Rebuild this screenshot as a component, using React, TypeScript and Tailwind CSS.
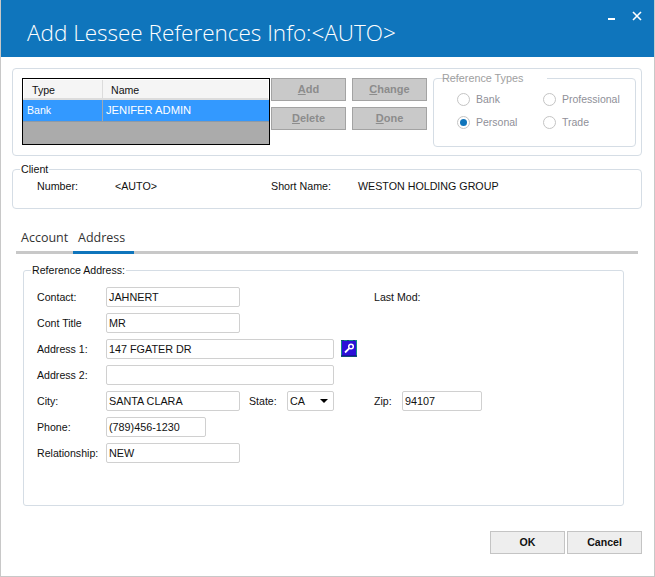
const sans = "font-['Liberation_Sans',Arial,sans-serif]"

function ActionButton({ hot, rest }: { hot: string; rest: string }) {
  return (
    <button className="flex h-[23px] w-[75px] items-center justify-center border border-[#a3a3a3] bg-[#c9c9c9] text-[11px] font-bold text-[#8c8c8c]">
      <span className="underline">{hot}</span>
      {rest}
    </button>
  )
}

function Radio({ label, checked, className }: { label: string; checked?: boolean; className: string }) {
  return (
    <div className={`flex items-center gap-[6px] ${className}`}>
      <span className="flex h-[13px] w-[13px] items-center justify-center rounded-full border border-[#c4c4c4] bg-white">
        {checked && <span className="h-[7px] w-[7px] rounded-full bg-[#0f75bc]" />}
      </span>
      <span className="text-[10.5px] leading-none text-[#8f8f98]">{label}</span>
    </div>
  )
}

function Field({ value, width }: { value?: string; width: string }) {
  return (
    <div className={`flex h-[20px] items-center rounded-[2px] border border-[#d0d0d0] pl-[2px] text-[10.8px] text-[#111] ${width}`}>
      {value}
    </div>
  )
}

function Row({ label, children }: { label: string; children: React.ReactNode }) {
  return (
    <div className="flex h-[20px] items-center">
      <span className="w-[70px] pl-[1px] pt-[1px] text-[10.6px] text-[#111]">{label}</span>
      {children}
    </div>
  )
}

function KeyIcon() {
  return (
    <svg width="16" height="17" viewBox="0 0 16 17" className="ml-[7px] -mt-[2px]">
      <rect width="16" height="17" fill="#118a8a" />
      <rect x="1" y="1" width="14" height="15" fill="#2a10d8" />
      <path d="M0 16h16M0 0h3M6 0h2M12 0h2" stroke="#10106a" strokeWidth="1" />
      <circle cx="10" cy="6.5" r="2.3" fill="none" stroke="#fff" strokeWidth="1.5" />
      <path d="M8.2 8.3 4 12.5" stroke="#fff" strokeWidth="1.8" />
    </svg>
  )
}

export default function App() {
  return (
    <div className={`flex h-[577px] w-[655px] flex-col overflow-hidden border-x border-b border-[#c8c8c8] bg-white ${sans}`}>
      <header className="-mx-px flex h-[57px] shrink-0 bg-[#0f75bc]">
        <h1 className="ml-[27px] mt-[18px] font-['Open_Sans',sans-serif] text-[22.5px] font-light leading-[30px] text-white">
          Add Lessee References Info:&lt;AUTO&gt;
        </h1>
        <div className="ml-auto mr-[13px] mt-[6px] flex gap-[17px] text-white">
          <span className="mt-[12px] h-[2px] w-[7px] bg-white" />
          <svg width="10" height="10" viewBox="0 0 10 10" className="mt-[5px]">
            <path d="M1 1l8 8M9 1l-8 8" stroke="#fff" strokeWidth="1.6" />
          </svg>
        </div>
      </header>

      <section className="ml-[11px] mt-[11px] flex h-[88px] w-[630px] rounded-[4px] border border-[#d5dde5] pl-[9px] pt-[9px]">
        <div className="flex h-[67px] w-[248px] flex-col border border-black bg-[#ababab] text-[10.6px]">
          <div className="flex h-[21px] border border-b-2 border-white border-b-[#dcdcdc] bg-[#f5f5f5] text-[#111]">
            <span className="w-[79px] border-r border-[#dcdcdc] pl-[8px] pt-[1px] leading-[19px]">Type</span>
            <span className="pl-[8px] pt-[1px] leading-[19px]">Name</span>
          </div>
          <div className="flex h-[22px] border-b border-[#8f9aa5] bg-[#3399ff] leading-[21px] text-white">
            <span className="w-[80px] border-r border-[#a0a8b0] pl-[4px]">Bank</span>
            <span className="pl-[3px] text-[11.2px]">JENIFER ADMIN</span>
          </div>
        </div>
        <div className="ml-[1px] flex flex-col gap-[6px]">
          <ActionButton hot="A" rest="dd" />
          <ActionButton hot="D" rest="elete" />
        </div>
        <div className="ml-[6px] flex flex-col gap-[6px]">
          <ActionButton hot="C" rest="hange" />
          <ActionButton hot="D" rest="one" />
        </div>
        <fieldset className="relative -mt-[7px] ml-[6px] h-[76px] w-[203px] rounded-[4px] border border-[#d5dde5] pl-[23px]">
          <legend className="ml-[7px] -translate-x-[23px] px-[1px] text-[10.8px] leading-[14px] text-[#a0a0a0]">Reference Types</legend>
          <div className="mt-[8px] flex">
            <Radio label="Bank" className="w-[86px]" />
            <Radio label="Professional" className="" />
          </div>
          <div className="mt-[10px] flex">
            <Radio label="Personal" checked className="w-[86px]" />
            <Radio label="Trade" className="" />
          </div>
        </fieldset>
      </section>

      <fieldset className="ml-[11px] mt-[6px] h-[47px] w-[630px] rounded-[4px] border border-[#d5dde5] text-[10.7px] text-[#111]">
        <legend className="ml-[7px] px-[1px] leading-[14px]">Client</legend>
        <div className="mt-[3px] flex leading-[14px]">
          <span className="ml-[24px] w-[78px]">Number:</span>
          <span className="w-[156px]">&lt;AUTO&gt;</span>
          <span className="w-[87px]">Short Name:</span>
          <span>WESTON HOLDING GROUP</span>
        </div>
      </fieldset>

      <nav className="ml-[15px] mt-[15px] w-[622px] border-b-[3px] border-[#c8c8c8] font-['Open_Sans',sans-serif] text-[12.5px] text-[#333]">
        <div className="flex">
          <span className="ml-[5px] w-[52px] leading-[27px]">Account</span>
          <span className="relative w-[61px] pl-[5px] leading-[27px]">
            Address
            <span className="absolute -bottom-[3px] left-0 h-[3px] w-full bg-[#0f75bc]" />
          </span>
        </div>
      </nav>

      <fieldset className="ml-[22px] mt-[9px] h-[243px] w-[601px] rounded-[3px] border border-[#d5dde5] pl-[12px] text-[10.6px] text-[#111]">
        <legend className="-ml-[5px] px-[1px] leading-[14px]">Reference Address:</legend>
        <div className="mt-[10px] flex flex-col gap-[6px]">
          <Row label="Contact:">
            <Field value="JAHNERT" width="w-[134px]" />
            <span className="ml-[134px] pt-[1px]">Last Mod:</span>
          </Row>
          <Row label="Cont Title">
            <Field value="MR" width="w-[134px]" />
          </Row>
          <Row label="Address 1:">
            <Field value="147 FGATER DR" width="w-[228px]" />
            <KeyIcon />
          </Row>
          <Row label="Address 2:">
            <Field width="w-[228px]" />
          </Row>
          <Row label="City:">
            <Field value="SANTA CLARA" width="w-[134px]" />
            <span className="ml-[9px] w-[38px] pt-[1px]">State:</span>
            <div className="flex h-[20px] w-[47px] items-center justify-between rounded-[2px] border border-[#d0d0d0] pl-[2px] pr-[5px] text-[10.8px]">
              CA
              <span className="h-0 w-0 border-x-[4px] border-t-[4px] border-x-transparent border-t-black" />
            </div>
            <span className="ml-[40px] w-[28px] pt-[1px]">Zip:</span>
            <Field value="94107" width="w-[80px]" />
          </Row>
          <Row label="Phone:">
            <Field value="(789)456-1230" width="w-[100px]" />
          </Row>
          <Row label="Relationship:">
            <Field value="NEW" width="w-[134px]" />
          </Row>
        </div>
      </fieldset>

      <footer className="ml-[489px] mt-[25px] flex gap-[2px]">
        <button className="h-[23px] w-[75px] border border-[#c4c4c4] bg-[#eeeeee] text-[10.6px] font-bold text-[#111]">OK</button>
        <button className="h-[23px] w-[75px] border border-[#c4c4c4] bg-[#eeeeee] text-[10.6px] font-bold text-[#111]">Cancel</button>
      </footer>
    </div>
  )
}
